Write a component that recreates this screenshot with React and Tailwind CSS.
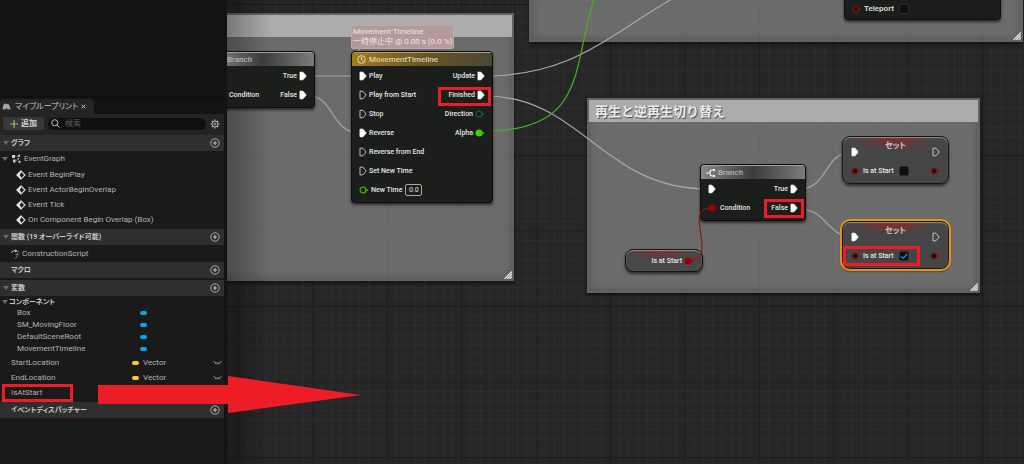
import React, { useState } from 'react';

const Highlight = ({ className }) => (
  <div className={`absolute z-20 border-3 border-[#ee1c25] pointer-events-none ${className}`} />
);

/* ---------- icons ---------- */

const PlusCircle = () => (
  <svg viewBox="0 0 10 10" className="w-[10px] h-[10px]" fill="none" stroke="#b9b9b9">
    <circle cx="5" cy="5" r="4.2" strokeWidth="0.9" />
    <path d="M5 3v4M3 5h4" strokeWidth="1.2" />
  </svg>
);

const Caret = () => (
  <svg viewBox="0 0 6 4" className="w-[6px] h-[4px] shrink-0" fill="#6a6a6a">
    <path d="M0 0h6L3 4z" />
  </svg>
);

const EventIcon = () => (
  <svg viewBox="0 0 10 10" className="w-[10px] h-[10px] shrink-0">
    <path d="M5 1L9 5L5 9L1 5z" fill="#1a1a1a" stroke="#d8d8d8" strokeWidth="1.2" />
    <path d="M5 .4L.4 5L5 9.6V7L3.6 5L5 3z" fill="#e8e8e8" />
  </svg>
);

const GraphIcon = () => (
  <svg viewBox="0 0 10 10" className="w-[10px] h-[10px] shrink-0" fill="#cfcfcf">
    <path d="M1 1h3v3H1zM2 5.500h2.500v3H2zM7 .800h2v2H7zM6.500 4h1.500v1.500H6.500zM7.500 6.800h2v2h-2z" />
    <path d="M4 2.500h3M4 7h1.500l1-2" stroke="#8a8a8a" strokeWidth="0.6" fill="none" />
  </svg>
);

const FunctionIcon = () => (
  <svg viewBox="0 0 10 10" className="w-[10px] h-[10px] shrink-0" fill="none">
    <path d="M.5 3.800C1 2 2.500 1.600 5 1.800" stroke="#c8c8c8" strokeWidth="1" />
    <path d="M4.200 .2L6.500 1.900L4.200 3.400z" fill="#e0e0e0" />
    <path d="M8.500 2.600C7.200 1.800 6.700 3 6.400 4.600L5.700 8C5.400 9.500 4.500 9.600 3.500 9M4.600 5.300h3.200" stroke="#7d7d7d" strokeWidth="0.9" />
  </svg>
);

const BlueprintIcon = () => (
  <svg viewBox="0 0 10 9" className="w-[9px] h-[8px] shrink-0" fill="#a8a8a8">
    <path d="M2 1L4.300 .5L5 1.500L7 .8L8.300 3L9.700 6.700H5.600L5 5L4.300 6.700H.3z" />
    <path d="M.5 7h4v1.200h-4zM5.500 7h4v1.200h-4z" fill="#5a5a5a" />
  </svg>
);

const SearchIcon = () => (
  <svg viewBox="0 0 10 10" className="w-[9px] h-[9px] shrink-0" fill="none" stroke="#c2c2c2" strokeWidth="1.100">
    <circle cx="4.200" cy="4.200" r="3.400" />
    <path d="M6.700 6.700L9.500 9.500" />
  </svg>
);

const GearIcon = () => (
  <svg viewBox="0 0 10 10" className="w-[10px] h-[10px]" fill="none" stroke="#b9b9b9">
    <circle cx="5" cy="5" r="3" strokeWidth="1" />
    <circle cx="5" cy="5" r="1" strokeWidth="0.800" />
    <path d="M5 .5v1.300M5 8.200v1.300M.5 5h1.300M8.200 5h1.300M1.800 1.800l.9.900M7.300 7.300l.9.900M1.800 8.200l.9-.9M7.300 2.700l.9-.9" strokeWidth="1.200" />
  </svg>
);

const ClosedEye = () => (
  <svg viewBox="0 0 10 5" className="w-[9px] h-[5px]" fill="none" stroke="#a5a5a5" strokeWidth="0.900">
    <path d="M.5 1C2.500 4 7.500 4 9.500 1M3 3L2.500 4.300M5 3.300v1.300M7 3l.5 1.300" />
  </svg>
);

const ExecPin = ({ filled = false }) => (
  <svg viewBox="0 0 8 10" className="w-[8px] h-[10px] shrink-0">
    <path
      d="M1 1.200h2.900L7.200 5L3.900 8.800H1z"
      fill={filled ? '#ffffff' : 'none'}
      stroke={filled ? '#ffffff' : '#d2d2d2'}
      strokeWidth="0.900"
      strokeLinejoin="round"
    />
  </svg>
);

const DataPin = ({ color, filled = false }) => (
  <svg viewBox="0 0 10 8" className="w-[10px] h-[8px] shrink-0">
    <circle cx="4" cy="4" r="2.900" fill={filled ? color : '#151515'} stroke={color} strokeWidth="1.300" />
    <path d="M7.300 2.500L9.500 4L7.300 5.500z" fill={color} />
  </svg>
);

const ResizeGrip = () => (
  <svg viewBox="0 0 8 8" className="absolute right-0 bottom-0 w-[8px] h-[8px]" stroke="#e2e2e2" strokeWidth="1.300">
    <path d="M.5 8L8 .5M3 8L8 3M5.500 8L8 5.500" />
  </svg>
);

/* ---------- side panel ---------- */

const AddButton = ({ label }) => (
  <button type="button" aria-label={label} className="ml-auto mr-[4px]">
    <PlusCircle />
  </button>
);

const SectionHeader = ({ title, open = true }) => (
  <div className="flex items-center h-[16px] pl-[3px] bg-[#2f2f2f] text-[#c8c8c8]">
    <span className="w-[8px]">{open && <Caret />}</span>
    <h2 className="text-[7px] font-bold [font-feature-settings:'palt']">{title}</h2>
    <AddButton label={`${title} add`} />
  </div>
);

const events = [
  'Event BeginPlay',
  'Event ActorBeginOverlap',
  'Event Tick',
  'On Component Begin Overlap (Box)',
];

const components = ['Box', 'SM_MovingFloor', 'DefaultSceneRoot', 'MovementTimeline'];

const VariableRow = ({ name, type }) => (
  <li className="flex items-center h-[15px] pl-[11px]">
    <span className="w-[121px]">{name}</span>
    {type && (
      <>
        <span className="w-[7px] h-[4px] rounded-full bg-[#ffc726]" />
        <span className="ml-[4px]">{type}</span>
        <button type="button" aria-label={`${name} visibility`} className="ml-auto mr-[2px]">
          <ClosedEye />
        </button>
      </>
    )}
  </li>
);

const MyBlueprint = () => (
  <aside className="flex flex-col shrink-0 w-[227px] pr-[3px] bg-[#131313] text-[#b4b4b4] text-[8px] leading-[12px]">
    <div className="h-[97px] border-b border-[#0e0e0e]" />
    <div className="flex mt-[2px] h-[15px]">
      <div className="flex items-center w-[94px] pl-[2px] rounded-t-sm bg-[#242424] text-[#c4c4c4] whitespace-nowrap">
        <BlueprintIcon />
        <span className="ml-[4px] [font-feature-settings:'palt']">マイブループリント</span>
        <button type="button" aria-label="close tab" className="ml-auto mr-[8px]">
          <svg viewBox="0 0 6 6" className="w-[5px] h-[5px]" stroke="#c4c4c4" strokeWidth="1.200">
            <path d="M.8 .8L5.200 5.200M5.200 .8L.8 5.200" />
          </svg>
        </button>
      </div>
    </div>
    <div className="flex items-center h-[21px] px-[3px] pb-[2px] bg-[#242424]">
      <button type="button" className="flex items-center justify-center gap-[3px] w-[41px] h-[13px] rounded-xs bg-[#383838] text-[#d0d0d0] font-bold">
        <svg viewBox="0 0 8 8" className="w-[8px] h-[8px]" stroke="#8bc24a" strokeWidth="1.200">
          <path d="M4 0v8M0 4h8" />
        </svg>
        追加
      </button>
      <label className="flex items-center grow gap-[5px] h-[12px] mx-[4px] pl-[3px] rounded-full bg-[#0f0f0f]">
        <SearchIcon />
        <input type="text" aria-label="検索" placeholder="検索" className="w-full min-w-0 bg-transparent outline-none placeholder:text-[#5c5c5c]" />
      </label>
      <button type="button" aria-label="settings" className="mr-px">
        <GearIcon />
      </button>
    </div>
    <div className="grow bg-[#1a1a1a]">
      <SectionHeader title="グラフ" />
      <div className="flex items-center gap-[3px] h-[16px] pl-[2px]">
        <Caret />
        <GraphIcon />
        <span>EventGraph</span>
      </div>
      <ul className="pb-[2px]">
        {events.map((name) => (
          <li key={name} className="flex items-center gap-[2px] h-[15px] pl-[16px]">
            <EventIcon />
            {name}
          </li>
        ))}
      </ul>
      <SectionHeader title="関数 (19 オーバーライド可能)" />
      <div className="flex items-center gap-px h-[17px] pl-[11px]">
        <FunctionIcon />
        <span>ConstructionScript</span>
      </div>
      <SectionHeader title="マクロ" open={false} />
      <div className="h-[2px]" />
      <SectionHeader title="変数" />
      <div className="flex items-center gap-px h-[11px] pl-[2px] text-[#c8c8c8]">
        <Caret />
        <h3 className="text-[7px] font-bold [font-feature-settings:'palt']">コンポーネント</h3>
      </div>
      <ul>
        {components.map((name) => (
          <li key={name} className="flex items-center h-[12px] pl-[17px]">
            <span className="w-[123px]">{name}</span>
            <span className="w-[7px] h-[4px] rounded-full bg-[#00a8f3]" />
          </li>
        ))}
      </ul>
      <ul className="pb-[2px]">
        <VariableRow name="StartLocation" type="Vector" />
        <VariableRow name="EndLocation" type="Vector" />
        <VariableRow name="IsAtStart" />
      </ul>
      <SectionHeader title="イベントディスパッチャー" open={false} />
    </div>
  </aside>
);

/* ---------- graph ---------- */

const GridBackground = () => (
  <svg className="absolute inset-0 w-full h-full">
    <defs>
      <pattern id="minor" width="10" height="10" patternUnits="userSpaceOnUse" patternTransform="translate(11 4) scale(0.93 0.944)">
        <path d="M0 .5H10M.5 0V10" stroke="#2d2d2d" strokeWidth="1" />
      </pattern>
      <pattern id="major" width="80" height="80" patternUnits="userSpaceOnUse" patternTransform="translate(11 4) scale(0.93 0.944)">
        <path d="M0 .5H80M.5 0V80" stroke="#1b1b1b" strokeWidth="1.200" />
      </pattern>
    </defs>
    <rect width="100%" height="100%" fill="#262626" />
    <rect width="100%" height="100%" fill="url(#minor)" />
    <rect width="100%" height="100%" fill="url(#major)" />
  </svg>
);

const CommentFrame = ({ className, title }) => (
  <section className={`absolute border-2 border-[#5c5c5c]/60 bg-[#a6a6a6]/54 shadow-[0_2px_4px_rgba(0,0,0,0.6),inset_0_0_8px_rgba(0,0,0,0.25)] ${className}`}>
    <h2 className="h-[22px] px-[6px] bg-[#acacac] text-[#ececec] text-[13px] leading-[23px] font-bold [text-shadow:1px_1px_1px_#4a4a4a]">
      {title}
    </h2>
    <ResizeGrip />
  </section>
);

const Row = ({ children }) => (
  <div className="flex items-center justify-between h-[19px]">{children}</div>
);

const Pin = ({ label, children, out = false }) => (
  <div className="flex items-center gap-[2px]">
    {out && label}
    {children}
    {!out && label}
  </div>
);

const nodeBox = 'absolute rounded-sm border border-[#0c0c0c] bg-[#1b1e1b] shadow-[0_2px_3px_rgba(0,0,0,0.6)] overflow-hidden';

const BranchNode = ({ className }) => (
  <article className={`${nodeBox} w-[106px] h-[57px] ${className}`}>
    <header className="flex items-center gap-[2px] h-[14px] pl-[5px] border-t border-[#a0a0a0] bg-linear-to-r from-[#8a8a8a] via-[#3c3c3c] to-[#7c7c7c] text-[#b4b4b4] text-[8px]">
      <svg viewBox="0 0 10 10" className="w-[10px] h-[10px]" fill="none" stroke="#f2f2f2" strokeWidth="1.200">
        <path d="M0 5h4M8 2H6C4 2 4 3.500 4 5S4 8 6 8h2" />
        <path d="M7 1h2v2H7zM7 7h2v2H7z" fill="#f2f2f2" stroke="none" />
      </svg>
      <h3>Branch</h3>
    </header>
    <div className="px-[7px]">
      <Row>
        <Pin><ExecPin filled /></Pin>
        <Pin label="True" out><ExecPin filled /></Pin>
      </Row>
      <Row>
        <Pin label="Condition"><DataPin color="#9b0000" filled /></Pin>
        <Pin label="False" out><ExecPin filled /></Pin>
      </Row>
    </div>
  </article>
);

const TimelineNode = ({ className }) => (
  <article className={`${nodeBox} w-[142px] ${className}`}>
    <header className="flex items-center gap-[3px] h-[14px] pl-[5px] border-t border-[#b0a070] bg-linear-to-r from-[#a37e17] via-[#6a5520] to-[#4a4638] text-[#d6d0bd] text-[8px]">
      <svg viewBox="0 0 10 10" className="w-[9px] h-[9px]" fill="none" stroke="#efe9d6" strokeWidth="1">
        <circle cx="5" cy="5" r="4.300" />
        <path d="M5 2v3l2 1.500" />
      </svg>
      <h3>MovementTimeline</h3>
    </header>
    <div className="px-[7px] pb-[3px]">
      <Row>
        <Pin label="Play"><ExecPin filled /></Pin>
        <Pin label="Update" out><ExecPin filled /></Pin>
      </Row>
      <Row>
        <Pin label="Play from Start"><ExecPin /></Pin>
        <Pin label="Finished" out><ExecPin filled /></Pin>
      </Row>
      <Row>
        <Pin label="Stop"><ExecPin /></Pin>
        <Pin label="Direction" out><DataPin color="#0d5c56" /></Pin>
      </Row>
      <Row>
        <Pin label="Reverse"><ExecPin filled /></Pin>
        <Pin label="Alpha" out><DataPin color="#37d600" filled /></Pin>
      </Row>
      <Row>
        <Pin label="Reverse from End"><ExecPin /></Pin>
      </Row>
      <Row>
        <Pin label="Set New Time"><ExecPin /></Pin>
      </Row>
      <Row>
        <label className="flex items-center gap-[2px]">
          <DataPin color="#37b800" />
          New Time
          <input type="text" defaultValue="0.0" className="w-[17px] h-[12px] ml-px border border-[#a8a8a8] rounded-xs text-center text-[#c0c0c0]" />
        </label>
      </Row>
    </div>
  </article>
);

const CheckBox = ({ checked, onChange }) => (
  <span className="relative flex ml-[3px]">
    <input type="checkbox" checked={checked} onChange={onChange} className="appearance-none w-[10px] h-[10px] rounded-xs border border-[#2c2c2c] bg-[#0f0f0f]" />
    {checked && (
      <svg viewBox="0 0 10 10" className="absolute inset-0 w-[10px] h-[10px] pointer-events-none" fill="none" stroke="#1183e6" strokeWidth="1.500">
        <path d="M2 5.200L4.200 7.300L8.200 3" />
      </svg>
    )}
  </span>
);

const SetNode = ({ className, initial = false, selected = false }) => {
  const [value, setValue] = useState(initial);

  return (
    <article
      className={`absolute w-[107px] h-[48px] px-[8px] rounded-lg border border-[#151515] bg-[#434343]/95 bg-[radial-gradient(ellipse_42px_14px_at_48%_0,#8a2a2a,transparent)] shadow-[0_2px_3px_rgba(0,0,0,0.6),inset_0_1px_1px_#909090] ${selected ? 'outline-2 outline-[#e8920c]' : ''} ${className}`}
    >
      <header className="flex items-end justify-between h-[20px] mb-[4px]">
        <ExecPin filled />
        <h3 className="self-start pt-[3px] text-[8px] font-bold text-[#c9c9c9] [font-feature-settings:'palt']">セット</h3>
        <ExecPin />
      </header>
      <Row>
        <label className="flex items-center gap-[2px]">
          <DataPin color="#8a1010" />
          Is at Start
          <CheckBox checked={value} onChange={(e) => setValue(e.target.checked)} />
        </label>
        <DataPin color="#8a1010" />
      </Row>
    </article>
  );
};

const Wires = () => (
  <svg className="absolute inset-0 w-full h-full pointer-events-none" fill="none" stroke="#a8a8a8" strokeWidth="1.200">
    <path d="M82 76H133" />
    <path d="M82 96C107 96 104 133 133 133" />
    <path d="M258 76C345 76 380 36 445 -1" />
    <path d="M258 96C355 96 375 189 481 189" />
    <path d="M258 131C360 131 345 68 367 -1" stroke="#45b022" />
    <path d="M572 189C602 189 596 152 626 152" />
    <path d="M572 209C600 209 600 237 626 237" />
  </svg>
);

const Graph = () => (
  <main className="relative grow min-w-0 overflow-hidden text-[7px] leading-[12px] font-medium text-[#e6e6e6]">
    <GridBackground />
    <CommentFrame className="-left-[60px] top-[13px] w-[347px] h-[268px]" />
    <CommentFrame className="left-[302px] -top-[60px] w-[494px] h-[102px]" />
    <CommentFrame className="left-[360px] top-[98px] w-[393px] h-[195px]" title="再生と逆再生切り替え" />
    <div className="absolute inset-y-0 left-0 w-[44px] bg-linear-to-r from-black/30 to-transparent" />
    <Wires />

    <article className={`${nodeBox} left-[617px] -top-[20px] w-[157px] h-[40px] px-[7px] pt-[18px]`}>
      <label className="flex items-center gap-[2px] h-[19px] text-[8px]">
        <DataPin color="#8a1010" />
        Teleport
        <CheckBox checked={false} onChange={() => {}} />
      </label>
    </article>

    <BranchNode className="-left-[18px] top-[51px]" />
    <TimelineNode className="left-[124px] top-[51px]" />
    <BranchNode className="left-[473px] top-[164px]" />
    <SetNode className="left-[615px] top-[136px]" />
    <SetNode className="left-[615px] top-[221px]" initial selected />
    <article className="absolute left-[398px] top-[249px] flex items-center justify-end gap-[2px] w-[78px] h-[23px] pr-[8px] rounded-lg border border-[#151515] bg-[#484848] bg-[radial-gradient(ellipse_34px_10px_at_45%_0,#8a2a2a,transparent)] shadow-[0_2px_3px_rgba(0,0,0,0.6),inset_0_1px_1px_#909090]">
      Is at Start
      <DataPin color="#9b0000" filled />
    </article>
    <svg className="absolute inset-0 w-full h-full pointer-events-none" fill="none" stroke="#941414" strokeWidth="1.200">
      <path d="M463 260C492 260 456 208 483 208" />
    </svg>

    <div className="absolute left-[124px] top-[25px] px-px py-px rounded-xs border border-[#c9a5a5] bg-[#b59a9a] text-[#eee4e4] text-[8px] leading-[10px] font-normal whitespace-nowrap [font-feature-settings:'palt']">
      <p>Movement Timeline</p>
      <p>一時停止中 @ 0.00 s (0.0 %)</p>
      <span className="absolute left-[5px] top-full w-0 h-0 border-x-2 border-t-3 border-x-transparent border-t-[#b59a9a]" />
    </div>

    <Highlight className="left-[211px] top-[87px] w-[53px] h-[19px]" />
    <Highlight className="left-[537px] top-[199px] w-[40px] h-[19px]" />
    <Highlight className="left-[616px] top-[246px] w-[77px] h-[20px]" />
  </main>
);

export default function App() {
  return (
    <div className="relative flex min-h-screen bg-[#131313] font-[family-name:Roboto,'Noto_Sans_CJK_JP',sans-serif]">
      <MyBlueprint />
      <Graph />
      <Highlight className="left-[2px] top-[384px] w-[71px] h-[18px]" />
      <svg viewBox="0 0 264 38" className="absolute z-20 left-[98px] top-[376px] w-[264px] h-[38px] pointer-events-none">
        <path d="M0 9H130V0L263 19L130 37V28H0z" fill="#ee1c25" />
      </svg>
    </div>
  );
}
